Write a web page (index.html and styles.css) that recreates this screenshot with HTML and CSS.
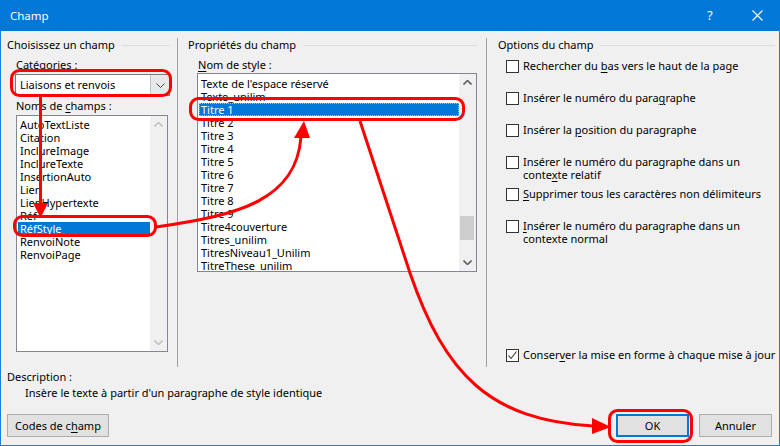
FILE: index.html
```html
<!DOCTYPE html>
<html lang="fr">
<head>
<meta charset="utf-8">
<title>Champ</title>
<link rel="stylesheet" href="styles.css">
</head>
<body>
<div class="window">
  <div class="titlebar">
    <span class="title">Champ</span>
    <span class="capbtn help">?</span>
    <span class="capbtn"><svg width="11" height="11" viewBox="0 0 11 11"><path d="M0.5 0.5L10.5 10.5M10.5 0.5L0.5 10.5" stroke="#fff" stroke-width="1.1" fill="none"/></svg></span>
  </div>

  <div class="groups">
    <section class="col col1">
      <div class="ghead"><span>Choisissez un champ</span><i></i></div>
      <div class="inner1">
        <div class="lbl">Caté<u>g</u>ories :</div>
        <div class="combo">
          <span class="combo-text">Liaisons et renvois</span>
          <span class="combo-btn"><svg width="9" height="5" viewBox="0 0 9 5"><path d="M0.5 0.5L4.5 4.5L8.5 0.5" stroke="#444" fill="none"/></svg></span>
        </div>
        <div class="lbl lbl2">Noms de <u>c</u>hamps :</div>
        <div class="listbox lb1">
          <div class="items">
            <div class="item">AutoTextListe</div>
            <div class="item">Citation</div>
            <div class="item">InclureImage</div>
            <div class="item">InclureTexte</div>
            <div class="item">InsertionAuto</div>
            <div class="item">Lien</div>
            <div class="item">LienHypertexte</div>
            <div class="item">Réf</div>
            <div class="item sel">RéfStyle</div>
            <div class="item">RenvoiNote</div>
            <div class="item">RenvoiPage</div>
          </div>
          <div class="sbar off">
            <span class="arr"><svg width="9" height="5" viewBox="0 0 9 5"><path d="M0.5 4.5L4.5 0.5L8.5 4.5" fill="none" stroke-width="1.6"/></svg></span>
            <span class="track"></span>
            <span class="arr"><svg width="9" height="5" viewBox="0 0 9 5"><path d="M0.5 0.5L4.5 4.5L8.5 0.5" fill="none" stroke-width="1.6"/></svg></span>
          </div>
        </div>
      </div>
    </section>

    <section class="col col2">
      <div class="ghead"><span>Propriétés du champ</span><i></i></div>
      <div class="inner2">
        <div class="lbl"><u>N</u>om de style :</div>
        <div class="listbox lb2">
          <div class="items">
            <div class="item">Texte de l'espace réservé</div>
            <div class="item">Texte_unilim</div>
            <div class="item sel focus">Titre 1</div>
            <div class="item">Titre 2</div>
            <div class="item">Titre 3</div>
            <div class="item">Titre 4</div>
            <div class="item">Titre 5</div>
            <div class="item">Titre 6</div>
            <div class="item">Titre 7</div>
            <div class="item">Titre 8</div>
            <div class="item">Titre 9</div>
            <div class="item">Titre4couverture</div>
            <div class="item">Titres_unilim</div>
            <div class="item">TitresNiveau1_Unilim</div>
            <div class="item">TitreThese_unilim</div>
          </div>
          <div class="sbar on">
            <span class="arr"><svg width="9" height="5" viewBox="0 0 9 5"><path d="M0.5 4.5L4.5 0.5L8.5 4.5" fill="none" stroke-width="1.6"/></svg></span>
            <span class="track"><span class="thumb"></span></span>
            <span class="arr"><svg width="9" height="5" viewBox="0 0 9 5"><path d="M0.5 0.5L4.5 4.5L8.5 0.5" fill="none" stroke-width="1.6"/></svg></span>
          </div>
        </div>
      </div>
    </section>

    <section class="col col3">
      <div class="ghead"><span>Options du champ</span><i></i></div>
      <div class="options">
        <div class="opt"><span class="cb"></span><span class="otext">Rechercher du <u>b</u>as vers le haut de la page</span></div>
        <div class="opt"><span class="cb"></span><span class="otext">Insérer le numéro du para<u>g</u>raphe</span></div>
        <div class="opt"><span class="cb"></span><span class="otext">Insérer la <u>p</u>osition du paragraphe</span></div>
        <div class="opt"><span class="cb"></span><span class="otext">Insérer le numéro du paragraphe dans un<br>conte<u>x</u>te relatif</span></div>
        <div class="opt"><span class="cb"></span><span class="otext"><u>S</u>upprimer tous les caractères non délimiteurs</span></div>
        <div class="opt"><span class="cb"></span><span class="otext"><u>I</u>nsérer le numéro du paragraphe dans un<br>contexte normal</span></div>
      </div>
      <div class="opt last"><span class="cb checked"><svg width="11" height="11" viewBox="0 0 11 11"><path d="M1.5 5.5L4 8.5L9.5 1.5" fill="none" stroke="#333" stroke-width="1.1"/></svg></span><span class="otext">Conser<u>v</u>er la mise en forme à chaque mise à jour</span></div>
    </section>
  </div>

  <div class="desc">
    <div class="dlabel">Description :</div>
    <div class="dtext">Insère le texte à partir d'un paragraphe de style identique</div>
  </div>

  <div class="buttons">
    <button class="btn codes">Codes de c<u>h</u>amp</button>
    <span class="spacer"></span>
    <button class="btn ok">OK</button>
    <button class="btn cancel">Annuler</button>
  </div>

  <svg class="annot" width="780" height="446" viewBox="0 0 780 446">
    <g fill="none" stroke="#f00" stroke-width="3">
      <rect x="11.5" y="70.5" width="159" height="25" rx="8"/>
      <path d="M40.5 96V205"/>
      <rect x="14.5" y="216.5" width="141" height="19" rx="8"/>
      <path d="M156 227C240 215 296 200 301 137"/>
      <rect x="190.5" y="98.5" width="273" height="21" rx="8"/>
      <path d="M360 121L410 273C445 375 490 420 593 426"/>
      <rect x="609.5" y="410.5" width="82" height="31" rx="8"/>
    </g>
    <g fill="#f00">
      <polygon points="33,203 48,203 40.5,218"/>
      <polygon points="294,138 310,138 304,121"/>
      <polygon points="592,418 592,434 611,427"/>
    </g>
  </svg>
</div>
</body>
</html>
```

FILE: styles.css
```css
* { box-sizing: border-box; }
html, body { margin: 0; padding: 0; }
body {
  width: 780px;
  height: 446px;
  overflow: hidden;
  font-family: "Noto Sans", "Open Sans", sans-serif;
  font-size: 11px;
  color: #000;
}
u { text-decoration: underline; text-underline-offset: 2px; }

.window {
  position: relative;
  width: 780px;
  height: 446px;
  background: #f0f0f0;
  border: 1px solid #1a7fd6;
  border-top: 0;
  display: flex;
  flex-direction: column;
}

.titlebar {
  height: 31px;
  flex: none;
  background: #0078d7;
  color: #fff;
  display: flex;
  align-items: center;
  margin: 0 -1px;
  padding-left: 10px;
}
.title { flex: 1; font-size: 11.5px; }
.capbtn {
  width: 46px;
  height: 31px;
  display: flex;
  align-items: center;
  justify-content: center;
  font-size: 12.5px;
}
.help { margin-right: 1px; }

.groups {
  display: flex;
  margin-top: 7px;
  height: 329px;
  flex: none;
}
.col { display: flex; flex-direction: column; }
.col1 { width: 176px; padding: 0 7px 0 6px; }
.col2 { width: 309px; border-left: 1px solid #a0a0a0; padding: 0 9px 0 10px; }
.col3 { flex: 1; border-left: 1px solid #a0a0a0; padding: 0 6px 0 11px; }

.ghead {
  height: 14px;
  line-height: 14px;
  display: flex;
  align-items: center;
  white-space: nowrap;
}
.ghead i { flex: 1; height: 1px; background: #dcdcdc; margin-left: 7px; }

.lbl { height: 14px; line-height: 14px; padding-left: 1px; white-space: nowrap; }

.inner1 { margin-left: 8px; padding-top: 6px; }
.combo {
  margin-top: 2px;
  width: 155px;
  height: 22px;
  background: #fff;
  border: 1px solid #7a7a7a;
  display: flex;
  align-items: stretch;
}
.combo-text { flex: 1; line-height: 20px; padding-left: 4px; }
.combo-btn {
  width: 19px;
  background: #e8e8e8;
  border-left: 1px solid #c4c4c4;
  display: flex;
  align-items: center;
  justify-content: center;
}
.lbl2 { margin-top: 3px; }

.listbox {
  margin-top: 2px;
  background: #fff;
  border: 1px solid #828790;
  display: flex;
}
.lb1 { margin-left: 1px; width: 152px; height: 237px; }
.items { flex: 1; padding-top: 1.5px; overflow: hidden; }
.lb2 .items { padding-top: 2.5px; }
.item {
  height: 13px;
  line-height: 13px;
  margin-left: 1px;
  padding-left: 2px;
  white-space: nowrap;
}
.item.sel { background: #0078d7; color: #fff; }
.item.focus { outline: 1px dotted #f7b540; outline-offset: -1px; }

.sbar {
  width: 17px;
  background: #f0f0f0;
  display: flex;
  flex-direction: column;
}
.arr { height: 17px; display: flex; align-items: center; justify-content: center; flex: none; }
.sbar.off svg { stroke: #c2c2c2; }
.sbar.on svg { stroke: #606060; }
.track { flex: 1; display: flex; flex-direction: column; }
.thumb { margin: 125px 2px 0 1px; height: 24px; background: #cdcdcd; }

.inner2 { margin-left: 9px; padding-top: 6px; }
.inner2 .lbl { height: 15px; }
.lb2 { margin-top: 0; width: 280px; height: 199px; }

.options { margin-left: 8px; padding-top: 7px; display: grid; grid-auto-rows: 32px; }
.opt { display: flex; align-items: flex-start; gap: 4px; line-height: 13px; white-space: nowrap; }
.cb {
  width: 13px;
  height: 13px;
  flex: none;
  border: 1px solid #333;
  background: #fff;
  margin-top: 0.5px;
  display: flex;
  align-items: center;
  justify-content: center;
}
.otext { line-height: 13px; }
.opt.last { margin: auto 0 6px 8px; height: 13px; }

.desc { padding-left: 6px; margin-top: 3px; }
.dlabel { height: 14px; line-height: 14px; }
.dtext { height: 14px; line-height: 14px; margin: 2px 0 0 18px; }

.buttons {
  display: flex;
  margin-top: 14px;
  padding: 0 7px 0 6px;
}
.spacer { flex: 1; }
.btn {
  height: 23px;
  background: #e1e1e1;
  border: 1px solid #adadad;
  font-family: inherit;
  font-size: 11px;
  color: #000;
  padding: 0;
}
.codes { width: 102px; }
.ok { width: 73px; border: 2px solid #0078d7; margin-right: 10px; }
.cancel { width: 73px; }

.annot { position: absolute; left: -1px; top: 0; pointer-events: none; }
```
